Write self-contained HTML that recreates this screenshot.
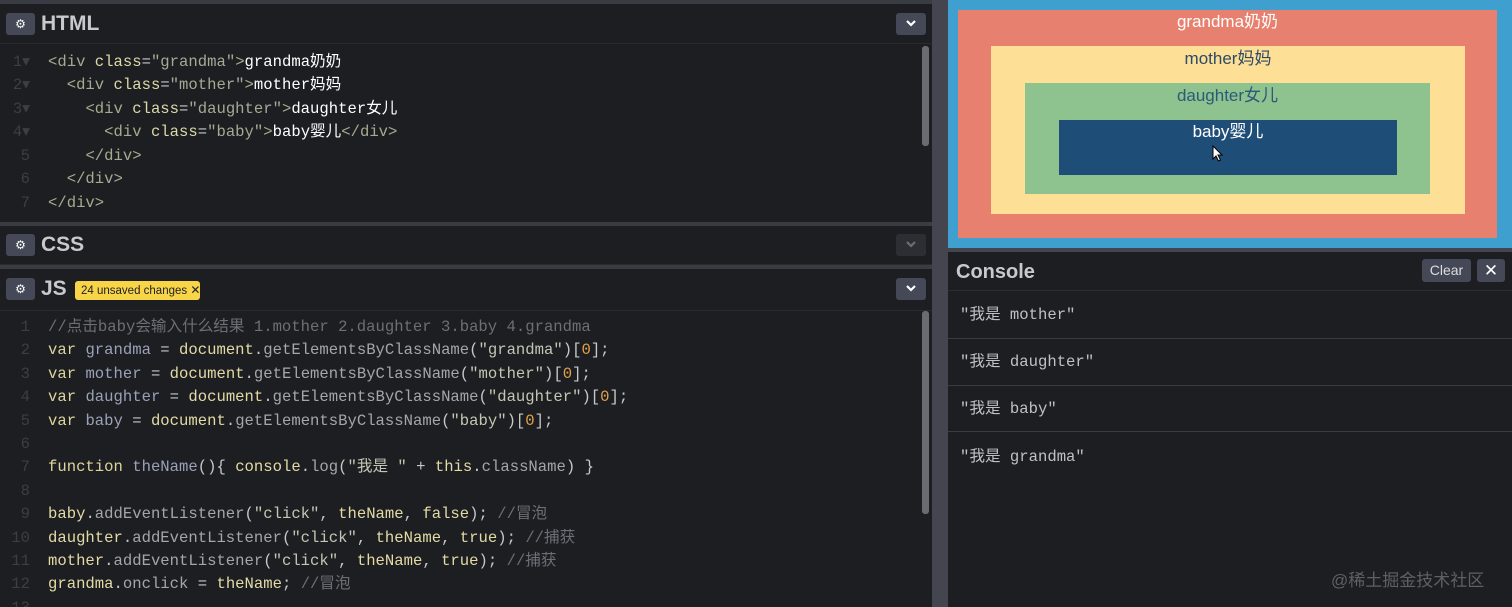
<!DOCTYPE html>
<html><head><meta charset="utf-8"><style>
*{margin:0;padding:0;box-sizing:border-box}
html,body{width:1512px;height:607px;overflow:hidden}
body{background:#1d1e22;position:relative;font-family:"Liberation Sans","Noto Sans CJK SC",sans-serif}
.abs{position:absolute}
.hdr{position:absolute;left:0;width:932px;background:#1d1e22;border-bottom:1px solid #2a2b31}
.gear{position:absolute;left:6px;width:29px;height:22px;background:#444857;border-radius:3px;color:#fff;font-size:12px;text-align:center;line-height:22px}
.title{position:absolute;left:41px;color:#c8c9cc;font-weight:bold;font-size:21px}
.dd{position:absolute;left:896px;width:30px;height:22px;background:#444857;border-radius:3px}
.dd svg{position:absolute;left:9px;top:6px}
.code{position:absolute;left:0;width:932px;font-family:"Liberation Mono","Noto Sans CJK SC",monospace;font-size:15.6px;color:#c5c8c6}
.ln{position:absolute;left:0;width:30px;text-align:right;color:#3c3e44;line-height:18px;height:18px}
.l{position:absolute;left:48px;white-space:pre;line-height:18px;height:18px}
.t{color:#a8a98f}.a{color:#dcd9a9}.s{color:#a7a995}.w{color:#fff}
.k{color:#dcd59e}.v{color:#9aa2b8}.f{color:#e3dba5}.p{color:#a3a6ab}.n{color:#e2a34a}.c{color:#6b6f76}.str{color:#c4c6b4}
.scroll{position:absolute;left:922px;width:7px;background:#6a6c72;border-radius:3px}
.con{position:absolute;left:948px;width:564px;border-bottom:1px solid #3a3c42;font-family:"Liberation Mono","Noto Sans CJK SC",monospace;font-size:15.6px;color:#bfc1c4;padding-left:12px;line-height:18px}
.pv{position:absolute;font-size:17px;text-align:center;line-height:20px}
</style></head><body>
<div class="abs" style="left:0;top:0;width:932px;height:4px;background:#3a3c44"></div>
<div class="abs" style="left:932px;top:0;width:16px;height:607px;background:#44464f"></div>
<!-- HTML -->
<div class="hdr" style="top:4px;height:40px"><div class="gear" style="top:9px">⚙</div><div class="title" style="top:8px">HTML</div><div class="dd" style="top:9px"><svg width="12" height="10"><path d="M2 2l4 4 4-4" stroke="#fff" stroke-width="2.2" fill="none"/></svg></div></div>
<div class="code" style="top:44px;height:178px;background:#1d1e22">
<div class="ln" style="top:9px">1▾</div><div class="ln" style="top:32px">2▾</div><div class="ln" style="top:56px">3▾</div><div class="ln" style="top:79px">4▾</div><div class="ln" style="top:103px">5</div><div class="ln" style="top:126px">6</div><div class="ln" style="top:150px">7</div>
<div class="l" style="top:9px"><span class="t">&lt;div</span> <span class="a">class</span>=<span class="s">"grandma"</span><span class="t">&gt;</span><span class="w">grandma奶奶</span></div>
<div class="l" style="top:32px">  <span class="t">&lt;div</span> <span class="a">class</span>=<span class="s">"mother"</span><span class="t">&gt;</span><span class="w">mother妈妈</span></div>
<div class="l" style="top:56px">    <span class="t">&lt;div</span> <span class="a">class</span>=<span class="s">"daughter"</span><span class="t">&gt;</span><span class="w">daughter女儿</span></div>
<div class="l" style="top:79px">      <span class="t">&lt;div</span> <span class="a">class</span>=<span class="s">"baby"</span><span class="t">&gt;</span><span class="w">baby婴儿</span><span class="t">&lt;/div&gt;</span></div>
<div class="l" style="top:103px">    <span class="t">&lt;/div&gt;</span></div>
<div class="l" style="top:126px">  <span class="t">&lt;/div&gt;</span></div>
<div class="l" style="top:150px"><span class="t">&lt;/div&gt;</span></div>
<div class="scroll" style="top:2px;height:100px"></div>
</div>
<div class="abs" style="left:0;top:222px;width:932px;height:4px;background:#3a3c44"></div>
<!-- CSS -->
<div class="hdr" style="top:226px;height:39px"><div class="gear" style="top:8px">⚙</div><div class="title" style="top:7px">CSS</div><div class="dd" style="top:8px;background:#2c2e34"><svg width="12" height="10"><path d="M2 2l4 4 4-4" stroke="#6b6d74" stroke-width="2.2" fill="none"/></svg></div></div>
<div class="abs" style="left:0;top:265px;width:932px;height:4px;background:#3a3c44"></div>
<!-- JS -->
<div class="hdr" style="top:269px;height:42px"><div class="gear" style="top:9px">⚙</div><div class="title" style="top:8px">JS</div>
<div class="abs" style="left:75px;top:12px;width:125px;height:19px;background:#f8d548;border-radius:3px;color:#222;font-size:11.5px;line-height:19px;padding-left:6px;white-space:nowrap">24 unsaved changes <span style="font-size:12px">✕</span></div>
<div class="dd" style="top:9px"><svg width="12" height="10"><path d="M2 2l4 4 4-4" stroke="#fff" stroke-width="2.2" fill="none"/></svg></div></div>
<div class="code" style="top:311px;height:296px">
<div class="ln" style="top:7px">1</div><div class="ln" style="top:30px">2</div><div class="ln" style="top:54px">3</div><div class="ln" style="top:77px">4</div><div class="ln" style="top:101px">5</div><div class="ln" style="top:124px">6</div><div class="ln" style="top:147px">7</div><div class="ln" style="top:171px">8</div><div class="ln" style="top:194px">9</div><div class="ln" style="top:218px">10</div><div class="ln" style="top:241px">11</div><div class="ln" style="top:264px">12</div><div class="ln" style="top:288px">13</div>
<div class="l c" style="top:7px">//点击baby会输入什么结果 1.mother 2.daughter 3.baby 4.grandma</div>
<div class="l" style="top:30px"><span class="k">var</span> <span class="v">grandma</span> = <span class="f">document</span>.<span class="p">getElementsByClassName</span>(<span class="str">"grandma"</span>)[<span class="n">0</span>];</div>
<div class="l" style="top:54px"><span class="k">var</span> <span class="v">mother</span> = <span class="f">document</span>.<span class="p">getElementsByClassName</span>(<span class="str">"mother"</span>)[<span class="n">0</span>];</div>
<div class="l" style="top:77px"><span class="k">var</span> <span class="v">daughter</span> = <span class="f">document</span>.<span class="p">getElementsByClassName</span>(<span class="str">"daughter"</span>)[<span class="n">0</span>];</div>
<div class="l" style="top:101px"><span class="k">var</span> <span class="v">baby</span> = <span class="f">document</span>.<span class="p">getElementsByClassName</span>(<span class="str">"baby"</span>)[<span class="n">0</span>];</div>
<div class="l" style="top:147px"><span class="k">function</span> <span class="v">theName</span>(){ <span class="f">console</span>.<span class="p">log</span>(<span class="str">"我是 "</span> + <span class="f">this</span>.<span class="p">className</span>) }</div>
<div class="l" style="top:194px"><span class="f">baby</span>.<span class="p">addEventListener</span>(<span class="str">"click"</span>, <span class="f">theName</span>, <span class="f">false</span>); <span class="c">//冒泡</span></div>
<div class="l" style="top:218px"><span class="f">daughter</span>.<span class="p">addEventListener</span>(<span class="str">"click"</span>, <span class="f">theName</span>, <span class="f">true</span>); <span class="c">//捕获</span></div>
<div class="l" style="top:241px"><span class="f">mother</span>.<span class="p">addEventListener</span>(<span class="str">"click"</span>, <span class="f">theName</span>, <span class="f">true</span>); <span class="c">//捕获</span></div>
<div class="l" style="top:264px"><span class="f">grandma</span>.<span class="p">onclick</span> = <span class="f">theName</span>; <span class="c">//冒泡</span></div>
<div class="scroll" style="top:0;height:203px"></div>
</div>
<!-- preview -->
<div class="abs" style="left:948px;top:0;width:564px;height:248px;background:#3fa0cf"></div>
<div class="pv" style="left:958px;top:10px;width:539px;height:228px;background:#e8806f;color:#fff;padding-top:2px">grandma奶奶</div>
<div class="pv" style="left:991px;top:46px;width:474px;height:168px;background:#fde096;color:#2d4a66;padding-top:3px">mother妈妈</div>
<div class="pv" style="left:1025px;top:83px;width:405px;height:111px;background:#8ec28f;color:#2d5a78;padding-top:3px">daughter女儿</div>
<div class="pv" style="left:1059px;top:120px;width:338px;height:55px;background:#1e4d78;color:#fff;padding-top:2px">baby婴儿</div>
<svg class="abs" style="left:1212px;top:145px" width="12" height="18"><path d="M1 1v13l3-3 2.5 5 2-1-2.5-5h4z" fill="#fff" stroke="#000" stroke-width="1"/></svg>
<div class="abs" style="left:948px;top:248px;width:564px;height:4px;background:#44464f"></div>
<!-- console -->
<div class="abs" style="left:948px;top:252px;width:564px;height:39px;border-bottom:1px solid #2c2d33"><div class="abs" style="left:8px;top:9px;color:#c8c9cc;font-weight:bold;font-size:20px">Console</div>
<div class="abs" style="left:474px;top:7px;width:49px;height:23px;background:#444857;border-radius:3px;color:#ddd;font-size:14px;text-align:center;line-height:23px">Clear</div>
<div class="abs" style="left:529px;top:7px;width:28px;height:23px;background:#444857;border-radius:3px;color:#fff;font-size:17px;text-align:center;line-height:23px">✕</div></div>
<div class="con" style="top:291px;height:48px;padding-top:15px">"我是 mother"</div>
<div class="con" style="top:339px;height:47px;padding-top:14px">"我是 daughter"</div>
<div class="con" style="top:386px;height:46px;padding-top:14px">"我是 baby"</div>
<div class="con" style="top:432px;height:175px;padding-top:16px;border:none">"我是 grandma"</div>
<div class="abs" style="left:1331px;top:566px;color:#5e6066;font-size:17px">@稀土掘金技术社区</div>
</body></html>
